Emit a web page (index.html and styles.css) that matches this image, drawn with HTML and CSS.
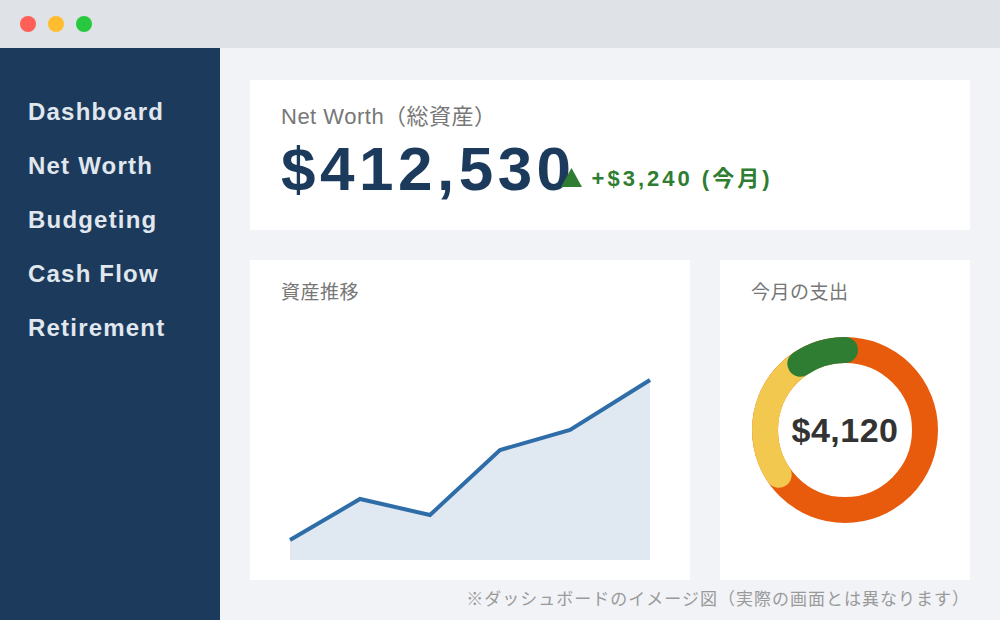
FILE: index.html
```html
<!DOCTYPE html>
<html lang="ja">
<head>
    <meta charset="UTF-8">
    <meta name="viewport" content="width=device-width, initial-scale=1.0">
    <title>Dashboard</title>
    <link rel="stylesheet" href="styles.css">
</head>
<body>
    <div class="window">
        <div class="titlebar">
            <span class="dot red"></span>
            <span class="dot yellow"></span>
            <span class="dot green"></span>
        </div>
        <div class="app">
            <nav class="sidebar">
                <a class="nav-item">Dashboard</a>
                <a class="nav-item">Net Worth</a>
                <a class="nav-item">Budgeting</a>
                <a class="nav-item">Cash Flow</a>
                <a class="nav-item">Retirement</a>
            </nav>
            <main class="main">
                <section class="card worth">
                    <div class="label">Net Worth（総資産）</div>
                    <div class="worth-row">
                        <span class="amount">$412,530</span><svg class="up" width="21" height="19" viewBox="0 0 21 19"><polygon points="10.5,0 21,19 0,19" fill="#2e7d32"/></svg><span class="change">+$3,240 (今月)</span>
                    </div>
                </section>
                <div class="row">
                    <section class="card chart">
                        <div class="card-title">資産推移</div>
                        <svg class="line" width="378" height="256" viewBox="0 0 378 256">
                            <polygon points="9,236 79,195 149,211 219,146 289,126 369,76 369,256 9,256" fill="#e0e8f1"/>
                            <polyline points="9,236 79,195 149,211 219,146 289,126 369,76" fill="none" stroke="#2f6da8" stroke-width="4"/>
                        </svg>
                    </section>
                    <section class="card spend">
                        <div class="card-title">今月の支出</div>
                        <div class="donut">
                            <svg width="186" height="186" viewBox="0 0 186 186">
                                <circle cx="93" cy="93" r="80" fill="none" stroke="#e85b0d" stroke-width="26"/>
                                <path d="M26.7,137.7 A80,80 0 0 1 48.3,26.7" fill="none" stroke="#f2c84f" stroke-width="26" stroke-linecap="round"/>
                                <path d="M48.3,26.7 A80,80 0 0 1 93,13" fill="none" stroke="#2e7d32" stroke-width="26" stroke-linecap="round"/>
                            </svg>
                            <span class="total">$4,120</span>
                        </div>
                    </section>
                </div>
                <p class="note">※ダッシュボードのイメージ図（実際の画面とは異なります）</p>
            </main>
        </div>
    </div>
</body>
</html>
```

FILE: styles.css
```css
body {
    margin: 0;
    font-family: "Liberation Sans", "Noto Sans CJK JP", sans-serif;
    background-color: #f1f3f7;
}

.window {
    width: 1000px;
    height: 620px;
    display: flex;
    flex-direction: column;
    overflow: hidden;
}

.titlebar {
    height: 48px;
    flex-shrink: 0;
    display: flex;
    align-items: center;
    gap: 12px;
    padding-left: 20px;
    background-color: #dfe2e7;
}

.dot {
    width: 16px;
    height: 16px;
    border-radius: 50%;
}

.dot.red {
    background-color: #fe5f57;
}

.dot.yellow {
    background-color: #febc2e;
}

.dot.green {
    background-color: #28c840;
}

.app {
    flex: 1;
    display: flex;
}

.sidebar {
    width: 220px;
    flex-shrink: 0;
    box-sizing: border-box;
    padding: 37px 0 0 28px;
    background-color: #1b3a5c;
    display: flex;
    flex-direction: column;
}

.nav-item {
    color: #e1e7ee;
    font-size: 24px;
    font-weight: bold;
    line-height: 54px;
    letter-spacing: 1.2px;
}

.main {
    flex: 1;
    padding: 32px 30px 0;
    display: flex;
    flex-direction: column;
}

.card {
    background-color: #fff;
    box-sizing: border-box;
}

.worth {
    height: 150px;
    padding: 25px 31px 0;
}

.label {
    color: #777;
    font-size: 22px;
    line-height: 24px;
    letter-spacing: 0.5px;
}

.worth-row {
    margin-top: 10px;
    line-height: 60px;
    white-space: nowrap;
}

.amount {
    color: #1b3a5c;
    font-size: 62px;
    font-weight: bold;
    letter-spacing: 4.5px;
}

.up {
    margin-left: -15px;
    vertical-align: 3px;
}

.change {
    margin-left: 10px;
    color: #2e7d32;
    font-size: 22px;
    font-weight: bold;
    letter-spacing: 3px;
    vertical-align: 4px;
}

.row {
    margin-top: 30px;
    display: flex;
    gap: 30px;
    height: 320px;
}

.chart {
    width: 440px;
    padding: 22px 31px 0;
}

.spend {
    width: 250px;
    padding: 22px 31px 0;
}

.card-title {
    color: #777;
    font-size: 19px;
    line-height: 22px;
    letter-spacing: 0.5px;
}

.line {
    display: block;
}

.donut {
    display: grid;
    place-items: center;
    margin: 33px -31px 0;
}

.donut svg,
.donut .total {
    grid-area: 1 / 1;
}

.total {
    color: #333;
    font-size: 34px;
    font-weight: bold;
    letter-spacing: 0.5px;
}

.note {
    margin: 0;
    text-align: right;
    color: #9a9a9a;
    font-size: 17px;
    line-height: 40px;
    letter-spacing: 1px;
}
```
